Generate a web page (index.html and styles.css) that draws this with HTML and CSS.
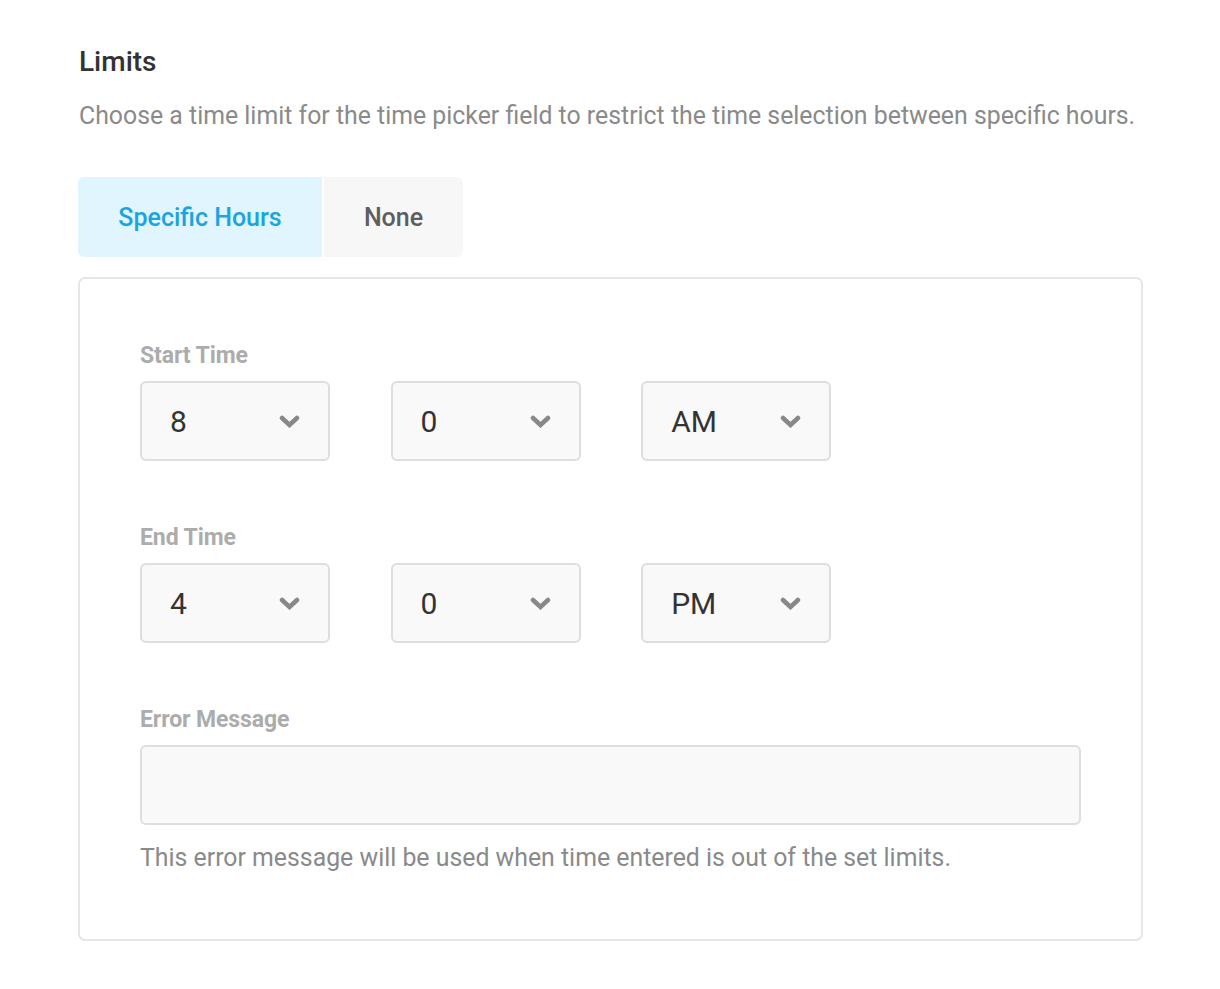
FILE: index.html
```html
<!DOCTYPE html>
<html>
<head>
<meta charset="utf-8">
<link rel="stylesheet" href="styles.css">
</head>
<body>
<div class="page">
  <h2 class="title">Limits</h2>
  <p class="desc">Choose a time limit for the time picker field to restrict the time selection between specific hours.</p>
  <div class="tabs">
    <div class="tab active">Specific Hours</div>
    <div class="tab">None</div>
  </div>
  <div class="card">
    <div class="field">
      <div class="label">Start Time</div>
      <div class="row">
        <div class="select"><span>8</span><svg class="chev" viewBox="0 0 21 13"><path d="M3 3L10.5 10L18 3"/></svg></div>
        <div class="select"><span>0</span><svg class="chev" viewBox="0 0 21 13"><path d="M3 3L10.5 10L18 3"/></svg></div>
        <div class="select"><span>AM</span><svg class="chev" viewBox="0 0 21 13"><path d="M3 3L10.5 10L18 3"/></svg></div>
      </div>
    </div>
    <div class="field">
      <div class="label">End Time</div>
      <div class="row">
        <div class="select"><span>4</span><svg class="chev" viewBox="0 0 21 13"><path d="M3 3L10.5 10L18 3"/></svg></div>
        <div class="select"><span>0</span><svg class="chev" viewBox="0 0 21 13"><path d="M3 3L10.5 10L18 3"/></svg></div>
        <div class="select"><span>PM</span><svg class="chev" viewBox="0 0 21 13"><path d="M3 3L10.5 10L18 3"/></svg></div>
      </div>
    </div>
    <div class="field">
      <div class="label">Error Message</div>
      <div class="input"></div>
      <p class="help">This error message will be used when time entered is out of the set limits.</p>
    </div>
  </div>
</div>
</body>
</html>
```

FILE: styles.css
```css
* { box-sizing: border-box; }
body {
  margin: 0;
  background: #fff;
  font-family: Roboto, "Noto Sans", sans-serif;
}
.page {
  padding: 42px 77px 0 78px;
}
.title {
  margin: 0;
  font-size: 28px;
  font-weight: 500;
  line-height: 40px;
  color: #333333;
  padding-left: 1px;
}
.desc {
  margin: 16px 0 0;
  font-size: 24.85px;
  line-height: 36px;
  color: #8a8a8a;
  padding-left: 1px;
}
.tabs {
  display: flex;
  gap: 2px;
  margin-top: 43px;
}
.tab {
  height: 80px;
  display: flex;
  align-items: center;
  justify-content: center;
  font-size: 25px;
  font-weight: 500;
  background: #f7f7f7;
  color: #5e5e5e;
  width: 139px;
  border-radius: 0 6px 6px 0;
}
.tab.active {
  width: 244px;
  background: #e1f5fe;
  color: #1ba4e2;
  border-radius: 6px 0 0 6px;
}
.card {
  margin-top: 20px;
  width: 1065px;
  border: 2px solid #e6e6e6;
  border-radius: 7px;
  padding: 62px 60px 63px;
  display: flex;
  flex-direction: column;
  gap: 62px;
}
.label {
  font-size: 23px;
  line-height: 30px;
  font-weight: 700;
  color: #acacac;
  margin-bottom: 10px;
  letter-spacing: -0.1px;
}
.row {
  display: flex;
  gap: 60.3px;
}
.select {
  width: 190.3px;
  height: 80px;
  background: #f9f9f9;
  border: 2px solid #dedede;
  border-radius: 6px;
  display: flex;
  align-items: center;
  justify-content: space-between;
  padding: 0 28px 0 28px;
  font-size: 30px;
  color: #333;
}
.chev {
  width: 21px;
  height: 13px;
  fill: none;
  stroke: #888;
  stroke-width: 4.5;
  stroke-linecap: round;
  stroke-linejoin: miter;
}
.input {
  width: 941px;
  height: 80px;
  background: #f9f9f9;
  border: 2px solid #dedede;
  border-radius: 6px;
}
.help {
  margin: 15px 0 0;
  font-size: 24.85px;
  line-height: 36px;
  color: #8a8a8a;
}
```
